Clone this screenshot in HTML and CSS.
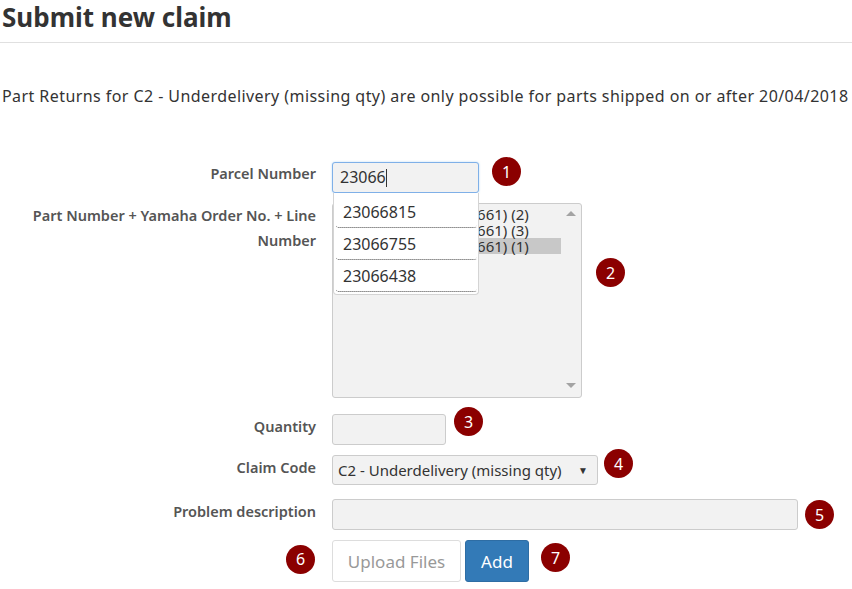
FILE: index.html
```html
<!DOCTYPE html>
<html lang="en">
<head>
  <meta charset="UTF-8" />
  <title>Submit new claim</title>
  <link rel="stylesheet" href="styles.css">
</head>
<body>
  <h1>Submit new claim</h1>
  <hr class="rule" />

  <p class="notice">Part Returns for C2 - Underdelivery (missing qty) are only possible for parts shipped on or after 20/04/2018</p>

  <form class="claim-form">
    <div class="row parcel-row">
      <label class="label">Parcel Number</label>
      <div class="field">
        <div class="autocomplete">
          <div class="input focused">23066<span class="caret"></span></div>
          <ul class="suggestions">
            <li>23066815</li>
            <li>23066755</li>
            <li>23066438</li>
          </ul>
        </div>
        <span class="badge b1">1</span>
      </div>
    </div>

    <div class="row part-row">
      <label class="label">Part Number + Yamaha Order No. + Line Number</label>
      <div class="field">
        <div class="listbox">
          <div class="options">
            <div class="option">23066815 (4500067661) (2)</div>
            <div class="option">23066755 (4500067661) (3)</div>
            <div class="option selected">23066438 (4500057661) (1)</div>
          </div>
          <div class="scroll">
            <span class="arrow up"></span>
            <span class="arrow down"></span>
          </div>
        </div>
        <span class="badge b2">2</span>
      </div>
    </div>

    <div class="row qty-row">
      <label class="label">Quantity</label>
      <div class="field">
        <div class="input qty"></div>
        <span class="badge b3">3</span>
      </div>
    </div>

    <div class="row code-row">
      <label class="label">Claim Code</label>
      <div class="field">
        <div class="select">C2 - Underdelivery (missing qty)<span class="select-arrow">&#9660;</span></div>
        <span class="badge b4">4</span>
      </div>
    </div>

    <div class="row desc-row">
      <label class="label">Problem description</label>
      <div class="field">
        <div class="input desc"></div>
        <span class="badge b5">5</span>
      </div>
    </div>

    <div class="row actions-row">
      <div class="label"><span class="badge b6">6</span></div>
      <div class="field">
        <button type="button" class="btn upload">Upload Files</button>
        <button type="button" class="btn add">Add</button>
        <span class="badge b7">7</span>
      </div>
    </div>
  </form>
</body>
</html>
```

FILE: styles.css
```css
body {
  margin: 0;
  padding: 0 0 0 2px;
  font-family: 'Noto Sans', sans-serif;
  color: #333;
  background: #fff;
}

h1 {
  margin: 0;
  padding-top: 1px;
  font-size: 26px;
  font-weight: bold;
  line-height: 32px;
  color: #333;
}

.rule {
  border: none;
  border-top: 1px solid #e0e0e0;
  margin: 9px 0 0 -2px;
}

.notice {
  margin: 42px 0 0;
  font-size: 16px;
  letter-spacing: 0.43px;
  line-height: 22px;
  white-space: nowrap;
}

.claim-form {
  margin-top: 55px;
}

.row {
  display: flex;
  gap: 16px;
}

.part-row { margin-top: 10px; }
.qty-row { margin-top: 16px; }
.code-row { margin-top: 10px; }
.desc-row { margin-top: 14px; }
.actions-row { margin-top: 10px; }

.label {
  flex: 0 0 314px;
  text-align: right;
  font-size: 14.5px;
  font-weight: 600;
  color: #555;
  line-height: 25px;
}

.parcel-row .label {
  line-height: 22px;
}

.field {
  display: flex;
  align-items: flex-start;
}

.autocomplete {
  position: relative;
}

.input {
  height: 31px;
  box-sizing: border-box;
  background: #f2f2f2;
  border: 1px solid #ccc;
  border-radius: 3px;
  font-size: 16px;
  line-height: 29px;
  padding: 0 7px;
}

.focused {
  width: 147px;
  border-color: #7fb0e8;
  box-shadow: 0 0 2px rgba(102, 175, 233, 0.5);
}

.caret {
  display: inline-block;
  width: 1px;
  height: 18px;
  background: #333;
  vertical-align: -4px;
}

.suggestions {
  position: absolute;
  left: 1px;
  top: 31px;
  width: 146px;
  box-sizing: border-box;
  margin: 0;
  padding: 3px 1px 2px 2px;
  list-style: none;
  background: #fff;
  border: 1px solid #d4d4d4;
  border-top: none;
  border-radius: 0 0 4px 4px;
  z-index: 2;
}

.suggestions li {
  height: 32px;
  box-sizing: border-box;
  padding: 3px 7px 0;
  font-size: 16px;
  line-height: 26px;
  color: #333;
  border-bottom: 1px dotted #444;
  border-radius: 0 0 3px 3px;
}

.badge {
  display: inline-flex;
  align-items: center;
  justify-content: center;
  width: 29px;
  height: 29px;
  border-radius: 50%;
  background: #8b0000;
  color: #fff;
  font-size: 16px;
  font-weight: normal;
}

.b1 { margin-left: 13px; margin-top: -5px; }
.b2 { margin-left: 14px; margin-top: 55px; }
.b3 { margin-left: 8px; margin-top: -7px; }
.b4 { margin-left: 6px; margin-top: -6px; }
.b5 { margin-left: 7px; margin-top: 1px; }
.b6 { margin: 5px 1px 0 0; }
.b7 { margin-left: 12px; margin-top: 3px; }

.listbox {
  width: 250px;
  height: 195px;
  box-sizing: border-box;
  background: #f2f2f2;
  border: 1px solid #ccc;
  border-radius: 3px;
  display: flex;
  overflow: hidden;
}

.options {
  flex: 1;
  overflow: hidden;
  padding-top: 2px;
  font-size: 15px;
  line-height: 16px;
  white-space: nowrap;
}

.option {
  padding: 0 2px 0 7px;
}

.selected {
  background: #c8c8c8;
}

.scroll {
  flex: 0 0 20px;
  position: relative;
}

.arrow {
  position: absolute;
  left: 5px;
  width: 0;
  height: 0;
  border-left: 5px solid transparent;
  border-right: 5px solid transparent;
}

.arrow.up {
  top: 7px;
  border-bottom: 5px solid #a3a3a3;
}

.arrow.down {
  bottom: 9px;
  border-top: 5px solid #a3a3a3;
}

.qty {
  width: 114px;
}

.select {
  width: 266px;
  height: 30px;
  box-sizing: border-box;
  background: #f2f2f2;
  border: 1px solid #ccc;
  border-radius: 3px;
  font-size: 15px;
  line-height: 28px;
  padding: 0 6px 0 5px;
  display: flex;
  justify-content: space-between;
}

.select-arrow {
  font-size: 10px;
  color: #333;
  padding-right: 3px;
}

.desc {
  width: 466px;
}

.btn {
  height: 42px;
  box-sizing: border-box;
  border-radius: 3px;
  font-family: inherit;
  font-size: 17px;
}

.upload {
  width: 129px;
  background: #fff;
  color: #999;
  border: 1px solid #ddd;
}

.add {
  width: 64px;
  margin-left: 4px;
  background: #337ab7;
  color: #fff;
  border: 1px solid #2e6da4;
}
```
